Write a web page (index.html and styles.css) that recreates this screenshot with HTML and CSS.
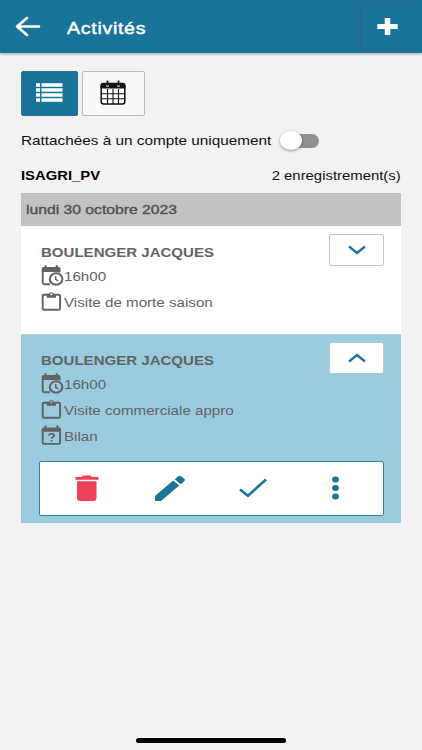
FILE: index.html
```html
<!DOCTYPE html>
<html lang="fr">
<head>
<meta charset="utf-8">
<title>Activités</title>
<link rel="stylesheet" href="styles.css">
</head>
<body>
<svg class="defs" width="0" height="0">
  <symbol id="clock" viewBox="0 0 23 22">
    <path d="M1.700 4.500V17.700a1.500 1.500 0 0 0 1.500 1.500H9M18.300 4.500v3" fill="none" stroke="currentColor" stroke-width="1.900"/>
    <path d="M.8 3.500a1.500 1.500 0 0 1 1.500-1.500H3.500V0.300h2.200V2h9V0.300h2.200V2h1a1.500 1.500 0 0 1 1.500 1.500V7H.8z" fill="currentColor"/>
    <ellipse cx="15.100" cy="14" rx="6.300" ry="5.700" fill="none" stroke="currentColor" stroke-width="2.100"/>
    <path d="M14.700 11v3.300l2.600 1.500" fill="none" stroke="currentColor" stroke-width="1.400"/>
  </symbol>
  <symbol id="clip" viewBox="0 0 23 22">
    <rect x="1.700" y="3.700" width="17.400" height="15" rx="1.200" fill="none" stroke="currentColor" stroke-width="1.900"/>
    <path d="M5.800 3.300h1.900a2.800 2.800 0 0 1 5.400 0h1.900v3.500H5.800z" fill="currentColor"/>
    <circle cx="10.400" cy="3.300" r="1" class="hole"/>
  </symbol>
  <symbol id="question" viewBox="0 0 23 22">
    <rect x="1.700" y="4" width="17.400" height="14.900" rx="1.200" fill="none" stroke="currentColor" stroke-width="1.900"/>
    <path d="M.8 4a1.500 1.500 0 0 1 1.500-1.500H3.500V0.500h2.200v2h9.600v-2h2.200v2h1a1.500 1.500 0 0 1 1.500 1.500v2.700H.8z" fill="currentColor"/>
    <path d="M8 10.500q0-1.700 2.600-1.700t2.600 1.700c0 1.500-2.600 1.500-2.600 3.200M10.600 14.900v1.700" fill="none" stroke="currentColor" stroke-width="1.800"/>
  </symbol>
</svg>

<header class="bar">
  <svg class="back" width="26" height="22" viewBox="0 0 26 22"><path d="M24 10.500H2.500M12 2L2 10.500l10 8.500" fill="none" stroke="#fff" stroke-width="2.700" stroke-linecap="round" stroke-linejoin="round"/></svg>
  <h1 class="title">Activités</h1>
  <button class="add"><svg width="22" height="20" viewBox="0 0 22 20"><path d="M10.500 1v17" stroke="#fff" stroke-width="5.500"/><path d="M.3 9.500h20.400" stroke="#fff" stroke-width="5"/></svg></button>
</header>

<main class="content">
  <div class="tabs">
    <button class="tab tab-list">
      <svg width="28" height="20" viewBox="0 0 28 20" fill="#fff"><path d="M0 .2h4v3.500H0zM0 5.200h4v3.500H0zM0 10.200h4v3.500H0zM0 15.200h4v3.500H0zM5.500 .2h21v3.500h-21zM5.500 5.200h21v3.500h-21zM5.500 10.200h21v3.500h-21zM5.500 15.200h21v3.500h-21z"/></svg>
    </button>
    <button class="tab tab-cal">
      <svg width="26" height="25" viewBox="0 0 26 25"><rect x="1.200" y="3.500" width="23.600" height="20.500" rx="2.500" fill="#fff" stroke="#111" stroke-width="1.500"/><path d="M.5 8.500V6a3 3 0 0 1 3-3h19a3 3 0 0 1 3 3v2.500z" fill="#111"/><path d="M7.500 9v15M13 9v15M18.500 9v15M1 13.700h24M1 18.700h24" stroke="#111" stroke-width="1.100"/><circle cx="7.500" cy="5.800" r="1.500" fill="#aaa"/><circle cx="18.500" cy="5.800" r="1.500" fill="#aaa"/><path d="M7.500.5v5M18.500.5v5" stroke="#111" stroke-width="1.700"/></svg>
    </button>
  </div>

  <div class="filter">
    <span class="text filter-label">Rattachées à un compte uniquement</span>
    <span class="switch"><span class="knob"></span></span>
  </div>

  <div class="summary">
    <strong class="text account">ISAGRI_PV</strong>
    <span class="text count">2 enregistrement(s)</span>
  </div>

  <div class="date"><span class="text date-text">lundi 30 octobre 2023</span></div>

  <article class="card">
    <div class="card-head">
      <div class="info">
        <h2 class="text name">BOULENGER JACQUES</h2>
        <div class="line"><svg width="23" height="22"><use href="#clock"/></svg><span class="text">16h00</span></div>
        <div class="line"><svg width="23" height="22"><use href="#clip"/></svg><span class="text">Visite de morte saison</span></div>
      </div>
      <button class="toggle"><svg width="18" height="10" viewBox="0 0 18 10"><path d="M1 1.500l8 6.500 8-6.500" fill="none" stroke="#187498" stroke-width="2.300"/></svg></button>
    </div>
  </article>

  <article class="card open">
    <div class="card-head">
      <div class="info">
        <h2 class="text name">BOULENGER JACQUES</h2>
        <div class="line"><svg width="23" height="22"><use href="#clock"/></svg><span class="text">16h00</span></div>
        <div class="line"><svg width="23" height="22"><use href="#clip"/></svg><span class="text">Visite commerciale appro</span></div>
        <div class="line"><svg width="23" height="22"><use href="#question"/></svg><span class="text">Bilan</span></div>
      </div>
      <button class="toggle"><svg width="18" height="10" viewBox="0 0 18 10"><path d="M1 8.500L9 2l8 6.500" fill="none" stroke="#187498" stroke-width="2.300"/></svg></button>
    </div>
    <div class="actions">
      <svg width="24" height="27" viewBox="0 0 24 27" fill="#ee4159"><path d="M.5 2h6l1.500-1.500h7.500L17 2h6.500v2.700H.5z"/><path d="M2 6.200h19.500v17.300a3 3 0 0 1-3 2.500H5a3 3 0 0 1-3-2.500z"/></svg>
      <svg width="30" height="27" viewBox="0 0 30 27" fill="#187498"><path d="M0 21L18.200 5.500l6 5L6 26H0zM19.700 4.200L23.200 1.200q1.500-1.100 3 0l3 2.600q1.300 1.200 0 2.500l-3.500 3z"/></svg>
      <svg width="28" height="20" viewBox="0 0 28 20"><path d="M1 11.500l8 6.200L27 1.500" fill="none" stroke="#187498" stroke-width="2.600"/></svg>
      <svg width="8" height="24" viewBox="0 0 8 24" fill="#187498"><ellipse cx="3.500" cy="3.400" rx="3.400" ry="3"/><ellipse cx="3.500" cy="11.900" rx="3.400" ry="3"/><ellipse cx="3.500" cy="20.400" rx="3.400" ry="3"/></svg>
    </div>
  </article>
</main>
<footer class="home"><span class="home-bar"></span></footer>
</body>
</html>
```
FILE: styles.css
```css
* { box-sizing: border-box; }
body {
  margin: 0;
  width: 422px;
  height: 750px;
  display: flex;
  flex-direction: column;
  overflow: hidden;
  background: #f2f2f2;
  color: #111;
  font: 13px/16px "Liberation Sans", Arial, sans-serif;
}
button { margin: 0; padding: 0; display: flex; align-items: center; justify-content: center; }
svg { display: block; flex: none; }
.defs { position: absolute; }

/* Wide-set lettering */
.text {
  display: inline-block;
  white-space: nowrap;
  transform: scaleX(1.165);
  transform-origin: 0 50%;
}

.bar {
  height: 53px;
  flex: none;
  display: flex;
  align-items: center;
  padding: 0 5px 0 15px;
  background: #187498;
  box-shadow: 0 1px 3px rgba(0, 0, 0, .3);
}
.title {
  margin: 2px 0 0 26px;
  font-size: 16.5px;
  line-height: 20px;
  font-weight: 400;
  letter-spacing: .6px;
  color: #fff;
  -webkit-text-stroke: .45px #fff;
  transform: scaleX(1.185);
  transform-origin: 0 50%;
}
.add {
  margin-left: auto;
  width: 57px;
  height: 46px;
  padding-right: 1px;
  border: 2px solid #246a95;
  background: transparent;
}

.content { flex: 1; padding: 18px 21px 0; }
.tabs { display: flex; gap: 4px; }
.tab { height: 45px; border-radius: 2px; padding-bottom: 2px; }
.tab-list { width: 57px; border: 1px solid #2d6f8c; background: #187498; }
.tab-list svg { margin-top: 1px; }
.tab-cal { width: 63px; border: 1px solid #b9b9b9; background: #f8f8f8; padding-right: 1px; }

.filter { display: flex; align-items: center; height: 24px; margin-top: 13px; }
.filter-label { width: 259px; transform: scaleX(1.178); }
.switch { position: relative; width: 39px; height: 14px; border-radius: 7px; background: linear-gradient(90deg, transparent 8px, #909090 8px); }
.knob {
  position: absolute;
  left: 0;
  top: -3px;
  width: 22px;
  height: 19px;
  border-radius: 50%;
  background: #fff;
  box-shadow: 0 1px 3px rgba(0, 0, 0, .4);
}

.summary { display: flex; justify-content: space-between; margin-top: 15px; height: 25px; }
.account { color: #000; transform: scaleX(1.14); }
.count { transform: scaleX(1.145); transform-origin: 100% 50%; }

.date { height: 33px; padding: 9px 5px; background: #c2c2c2; }
.date-text { color: #505050; -webkit-text-stroke: .35px #505050; transform: scaleX(1.208); }

.card { height: 108px; padding: 8px 17px 0 20px; background: #fff; color: #626262; --hole: #fff; }
.card-head { display: flex; justify-content: space-between; align-items: flex-start; }
.info { padding-top: 11px; }
.name { display: block; margin: 0 0 5px; font-size: 13px; line-height: 16px; transform: scaleX(1.157); }
.line { display: flex; align-items: center; height: 20px; margin-bottom: 6px; }
.line .text { margin-top: 2px; }
.hole { fill: var(--hole); }
.toggle { width: 55px; height: 32px; border: 1px solid #c4c4c4; border-radius: 2px; background: #fff; }

.open { height: 189px; background: #9bcbdf; --hole: #9bcbdf; border-top: 1px solid #b5d5e2; padding-top: 7px; }
.open .card-head { height: 114px; }
.open .toggle { border-color: #b5c9d1; }
.actions {
  display: grid;
  grid-template-columns: repeat(4, 83px);
  justify-content: center;
  align-items: center;
  justify-items: center;
  height: 55px;
  margin: 5px 0 0 -2px;
  padding-bottom: 1px;
  border: 1px solid #33809f;
  border-radius: 2px;
  background: #fff;
}

.home { height: 12px; flex: none; display: flex; justify-content: center; }
.home-bar { width: 150px; height: 5px; border-radius: 3px; background: #000; }
```
